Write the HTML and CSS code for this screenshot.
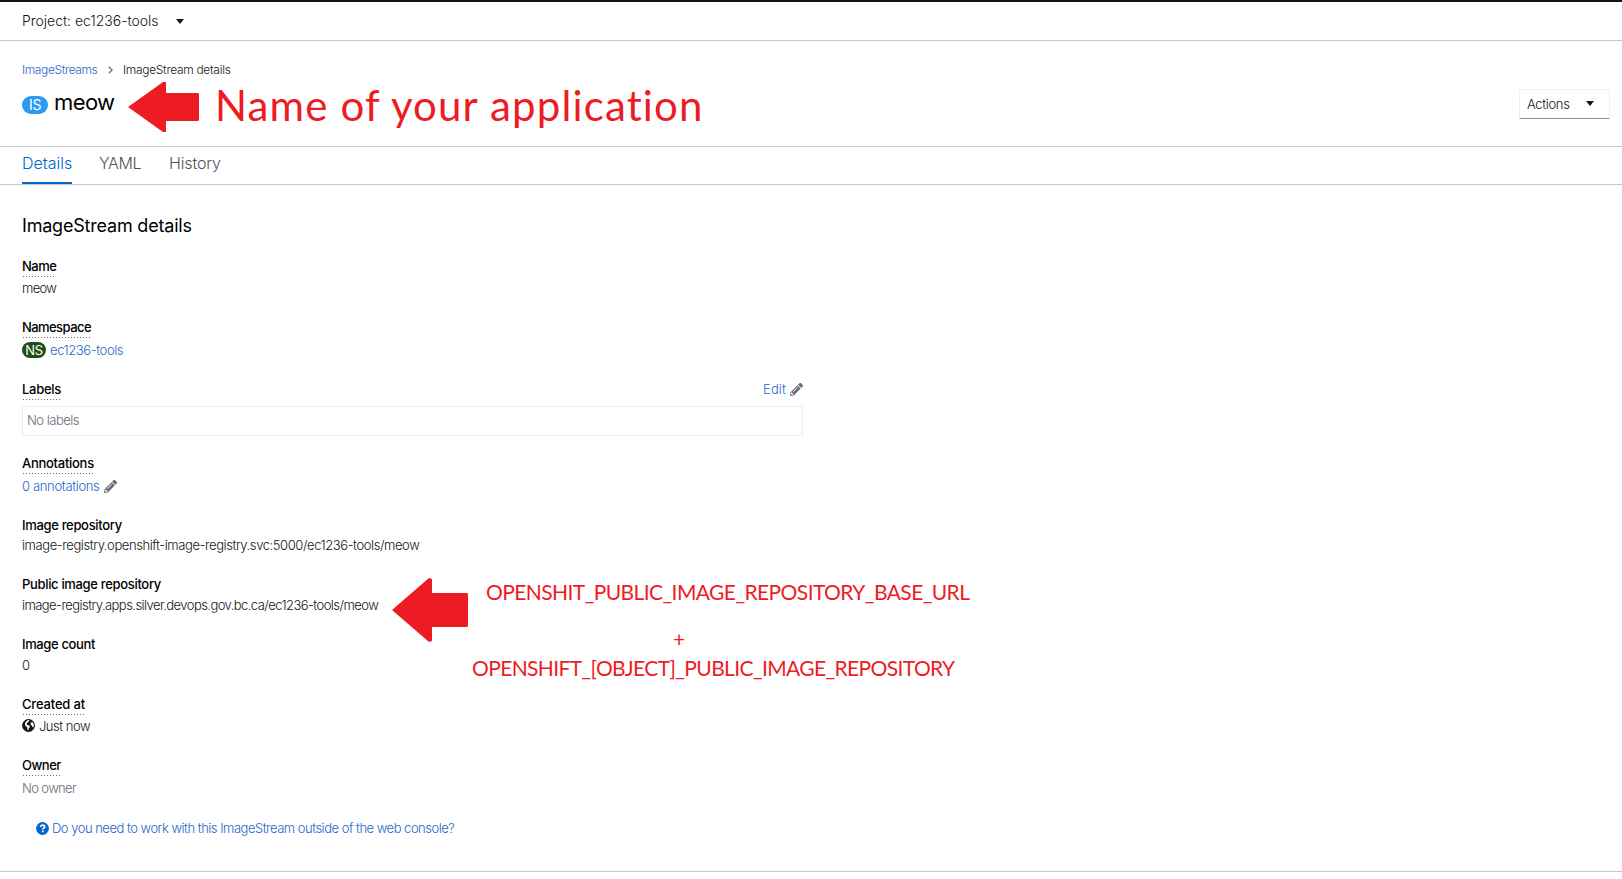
FILE: index.html
```html
<!DOCTYPE html>
<html lang="en">
<head>
<meta charset="utf-8">
<title>meow · ImageStream details</title>
<link rel="stylesheet" href="styles.css">
</head>
<body>
<svg width="0" height="0" class="defs">
  <symbol id="pencil" viewBox="0 0 512 512"><path d="M498 142l-46 46c-5 5-13 5-17 0L324 77c-5-5-5-12 0-17l46-46c19-19 49-19 68 0l60 60c19 19 19 49 0 68zm-214-42L22 362 0 484c-3 16 12 30 28 28l122-22 262-262c5-5 5-13 0-17L301 100c-4-5-12-5-17 0zM124 340c-5-6-5-14 0-20l154-154c6-5 14-5 20 0s5 14 0 20L144 340c-6 5-14 5-20 0zm-36 84h48v36l-64 12-32-31 12-65h36v48z"/></symbol>
</svg>

<header class="project-bar">
  <span class="project-name">Project: ec1236-tools</span>
  <span class="caret"></span>
</header>

<section class="page-head">
  <nav class="crumbs">
    <a class="crumb-link">ImageStreams</a>
    <svg class="crumb-sep" width="5" height="8" viewBox="0 0 5 8"><path d="M.8.8L4 4 .8 7.2"/></svg>
    <span class="crumb-current">ImageStream details</span>
  </nav>
  <div class="title-row">
    <span class="badge badge-is">IS</span>
    <h1 class="title">meow</h1>
    <button class="actions"><span class="actions-text">Actions</span><span class="caret"></span></button>
  </div>
</section>

<nav class="tabs">
  <a class="tab tab-active">Details</a>
  <a class="tab tab-yaml">YAML</a>
  <a class="tab tab-history">History</a>
</nav>

<main class="details">
  <h2 class="heading">ImageStream details</h2>
  <dl class="fields">
    <div class="field"><dt><span class="term hint t-name">Name</span></dt><dd class="v-meow">meow</dd></div>
    <div class="field field-ns"><dt><span class="term hint t-ns">Namespace</span></dt><dd><span class="badge badge-ns">NS</span><a class="link v-ns">ec1236-tools</a></dd></div>
    <div class="field field-labels">
      <dt class="labels-head"><span class="term hint t-labels">Labels</span><a class="link edit">Edit<svg class="pencil"><use href="#pencil"/></svg></a></dt>
      <dd class="labels-box">No labels</dd>
    </div>
    <div class="field field-ann"><dt><span class="term hint t-ann">Annotations</span></dt><dd><a class="link v-ann">0 annotations</a><svg class="pencil"><use href="#pencil"/></svg></dd></div>
    <div class="field field-repo"><dt><span class="term">Image repository</span></dt><dd class="v-repo">image-registry.openshift-image-registry.svc:5000/ec1236-tools/meow</dd></div>
    <div class="field field-public"><dt><span class="term">Public image repository</span></dt><dd class="v-public">image-registry.apps.silver.devops.gov.bc.ca/ec1236-tools/meow</dd></div>
    <div class="field field-count"><dt><span class="term t-count">Image count</span></dt><dd>0</dd></div>
    <div class="field"><dt><span class="term hint t-created">Created at</span></dt><dd class="v-created"><svg class="globe" viewBox="0 0 13 13"><circle cx="6.5" cy="6.5" r="6.4"/><path d="M5.6 1.2L7.4 1 7 2.6 5.6 3.4 4.6 4.8 5.2 6 7.4 6.6 8 8 6.8 9.2 6.4 11.4 5.4 10.4 5.2 8.2 3.6 7 2.8 5.2 3.4 3.2z" class="land-cut"/><path d="M8.8 3.6l1.8-.4 1.2 2-.2 2.6-1 .8-.6-1.8-1.4-1z" class="land-cut"/></svg>Just now</dd></div>
    <div class="field field-owner"><dt><span class="term hint t-owner">Owner</span></dt><dd class="muted">No owner</dd></div>
  </dl>
  <a class="link help"><svg class="question" viewBox="0 0 13 13"><circle cx="6.5" cy="6.5" r="6.4"/><path d="M4.4 4.9c.2-1.2 1-1.8 2.2-1.8 1.1 0 2.1.6 2.1 1.7 0 1.4-1.9 1.3-1.9 2.6"/><rect x="5.9" y="8.5" width="1.8" height="1.7" rx=".5"/></svg>Do you need to work with this ImageStream outside of the web console?</a>
</main>

<svg class="arrow arrow-title" viewBox="0 0 71 50"><path d="M0 25L35 0h3v11h32l1 1v26l-1 1H38v11h-3z"/></svg>
<p class="note note-title">Name of your application</p>
<svg class="arrow arrow-repo" viewBox="0 0 76 64"><path d="M0 32L37 0l3 1v14h35l1 1v32l-1 1H40v14l-3 1z"/></svg>
<p class="note note-base">OPENSHIT_PUBLIC_IMAGE_REPOSITORY_BASE_URL</p>
<p class="note note-plus">+</p>
<p class="note note-object">OPENSHIFT_[OBJECT]_PUBLIC_IMAGE_REPOSITORY</p>
</body>
</html>
```
FILE: styles.css
```css
* { box-sizing: border-box; }
body { margin: 0; height: 879px; position: relative; overflow: hidden; background: #fff; color: #151515; font: 300 13px/20px Inter, "Open Sans", sans-serif; letter-spacing: -0.4px; white-space: nowrap; }
h1, h2, p, dl, dd { margin: 0; }
.defs { position: absolute; }
.caret { width: 0; height: 0; border: 4.5px solid transparent; border-top: 5px solid #151515; border-bottom: 0; }

.project-bar { height: 41px; border-top: 2px solid #151515; border-bottom: 1px solid #c8c8c8; padding: 0 22px; display: flex; align-items: center; gap: 17px; font-size: 14px; letter-spacing: -0.03px; }
.project-name { width: 137px; }

.page-head { height: 106px; border-bottom: 1px solid #c8c8c8; padding: 19px 12px 0 22px; }
.crumbs { display: flex; align-items: center; font-size: 12px; }
.crumb-link { width: 76px; color: #2b66cc; letter-spacing: -0.38px; }
.crumb-sep { margin: 0 10px 0 10px; fill: none; stroke: #777; stroke-width: 1.4; }
.crumb-current { letter-spacing: -0.31px; }
.title-row { display: flex; align-items: flex-start; padding-top: 9px; }
.badge { display: block; color: #fff; text-align: center; border-radius: 20px; font-weight: 400; }
.badge-is { width: 26px; height: 18px; margin-top: 7px; background: #2b9af3; font-size: 14px; line-height: 18px; }
.title { margin-left: 6px; font-size: 22px; font-weight: 400; line-height: 26px; letter-spacing: -0.6px; color: #000; }
.actions { margin-left: auto; width: 91px; height: 30px; display: flex; align-items: center; justify-content: space-between; padding: 0 15px 1px 7px; background: #fff; border: 1px solid #f0f0f0; border-bottom-color: #8a8d90; font: inherit; color: inherit; letter-spacing: -0.35px; }

.tabs { height: 38px; border-bottom: 1px solid #c8c8c8; padding-left: 22px; display: flex; font-size: 16px; line-height: 33px; }
.tab { color: #4f5255; height: 37px; }
.tab-active { width: 50px; color: #06c; border-bottom: 2px solid #06c; letter-spacing: 0; }
.tab-yaml { margin-left: 27px; width: 43px; }
.tab-history { margin-left: 27px; letter-spacing: -0.15px; }

.details { height: 687px; border-bottom: 1px solid #c8c8c8; padding: 28px 22px 0; }
.heading { font-size: 18px; font-weight: 400; line-height: 26px; letter-spacing: -0.2px; color: #000; }
.fields { margin-top: 17px; width: 781px; }
.field { height: 61px; }
.field dt { height: 22px; }
.field dd { display: flex; align-items: center; height: 20px; }
.field-ns { height: 62px; }
.field-labels { height: 74px; }
.field-ann { height: 62px; }
.field-repo { height: 59px; }
.field-public, .field-count { height: 60px; }
.field-ns dt, .field-ann dt, .field-owner dt { height: 23px; }
.field-repo dt { height: 20px; }
.field-public dt, .field-count dt { height: 21px; }
.field-owner { height: 63px; }
.term { display: inline-block; height: 21px; font-weight: 500; color: #000; letter-spacing: -0.33px; }
.hint { background: repeating-linear-gradient(90deg, #6a6e73 0 1px, transparent 1px 3px) 1px 20px / calc(100% - 2px) 1px no-repeat; }
.t-name, .t-owner { letter-spacing: -0.47px; }
.t-ns { letter-spacing: -0.57px; }
.t-labels, .t-ann { letter-spacing: -0.28px; }
.t-count { letter-spacing: -0.37px; }
.t-created { letter-spacing: -0.17px; }
.v-meow { letter-spacing: -0.7px; }
.v-repo { letter-spacing: -0.42px; }
.v-public { letter-spacing: -0.56px; }
.v-ann { letter-spacing: -0.34px; }
.v-created { letter-spacing: -0.5px; }
.link { color: #2467c9; }
.badge-ns { width: 24px; height: 16px; margin-right: 4px; background: #1e4f18; font-size: 13px; line-height: 16px; }
.pencil { width: 13px; height: 13px; margin-left: 4px; fill: #6a6e73; }
.labels-head { display: flex; justify-content: space-between; }
.edit { display: flex; align-items: center; height: 20px; letter-spacing: 0.1px; }
.field .labels-box { height: 30px; margin-top: 5px; padding: 0 0 2px 4px; border: 1px solid #ededed; color: #6a6e73; letter-spacing: -0.5px; }
.muted { color: #6a6e73; letter-spacing: -0.64px; }
.globe { width: 13px; height: 13px; margin: -2px 4px 0 0; fill: #151515; }
.globe .land-cut { fill: #fff; }
.help { display: flex; align-items: center; margin-left: 14px; height: 20px; letter-spacing: -0.5px; }
.question { width: 13px; height: 13px; margin-right: 3px; fill: #06c; }
.question path { fill: none; stroke: #fff; stroke-width: 1.7; }
.question rect { fill: #fff; }

.arrow { position: absolute; fill: #ed1c24; }
.arrow-title { left: 128px; top: 82px; width: 71px; height: 50px; }
.arrow-repo { left: 392px; top: 578px; width: 76px; height: 64px; }
.note { position: absolute; color: #ed1c24; font: 400 21px/25px Lato, "Open Sans", sans-serif; letter-spacing: -0.58px; }
.note-title { left: 215px; top: 80px; font-size: 42px; line-height: 50px; letter-spacing: 1.14px; }
.note-base { left: 486px; top: 579px; }
.note-plus { left: 673px; top: 626px; }
.note-object { left: 472px; top: 655px; letter-spacing: -0.62px; }
```
